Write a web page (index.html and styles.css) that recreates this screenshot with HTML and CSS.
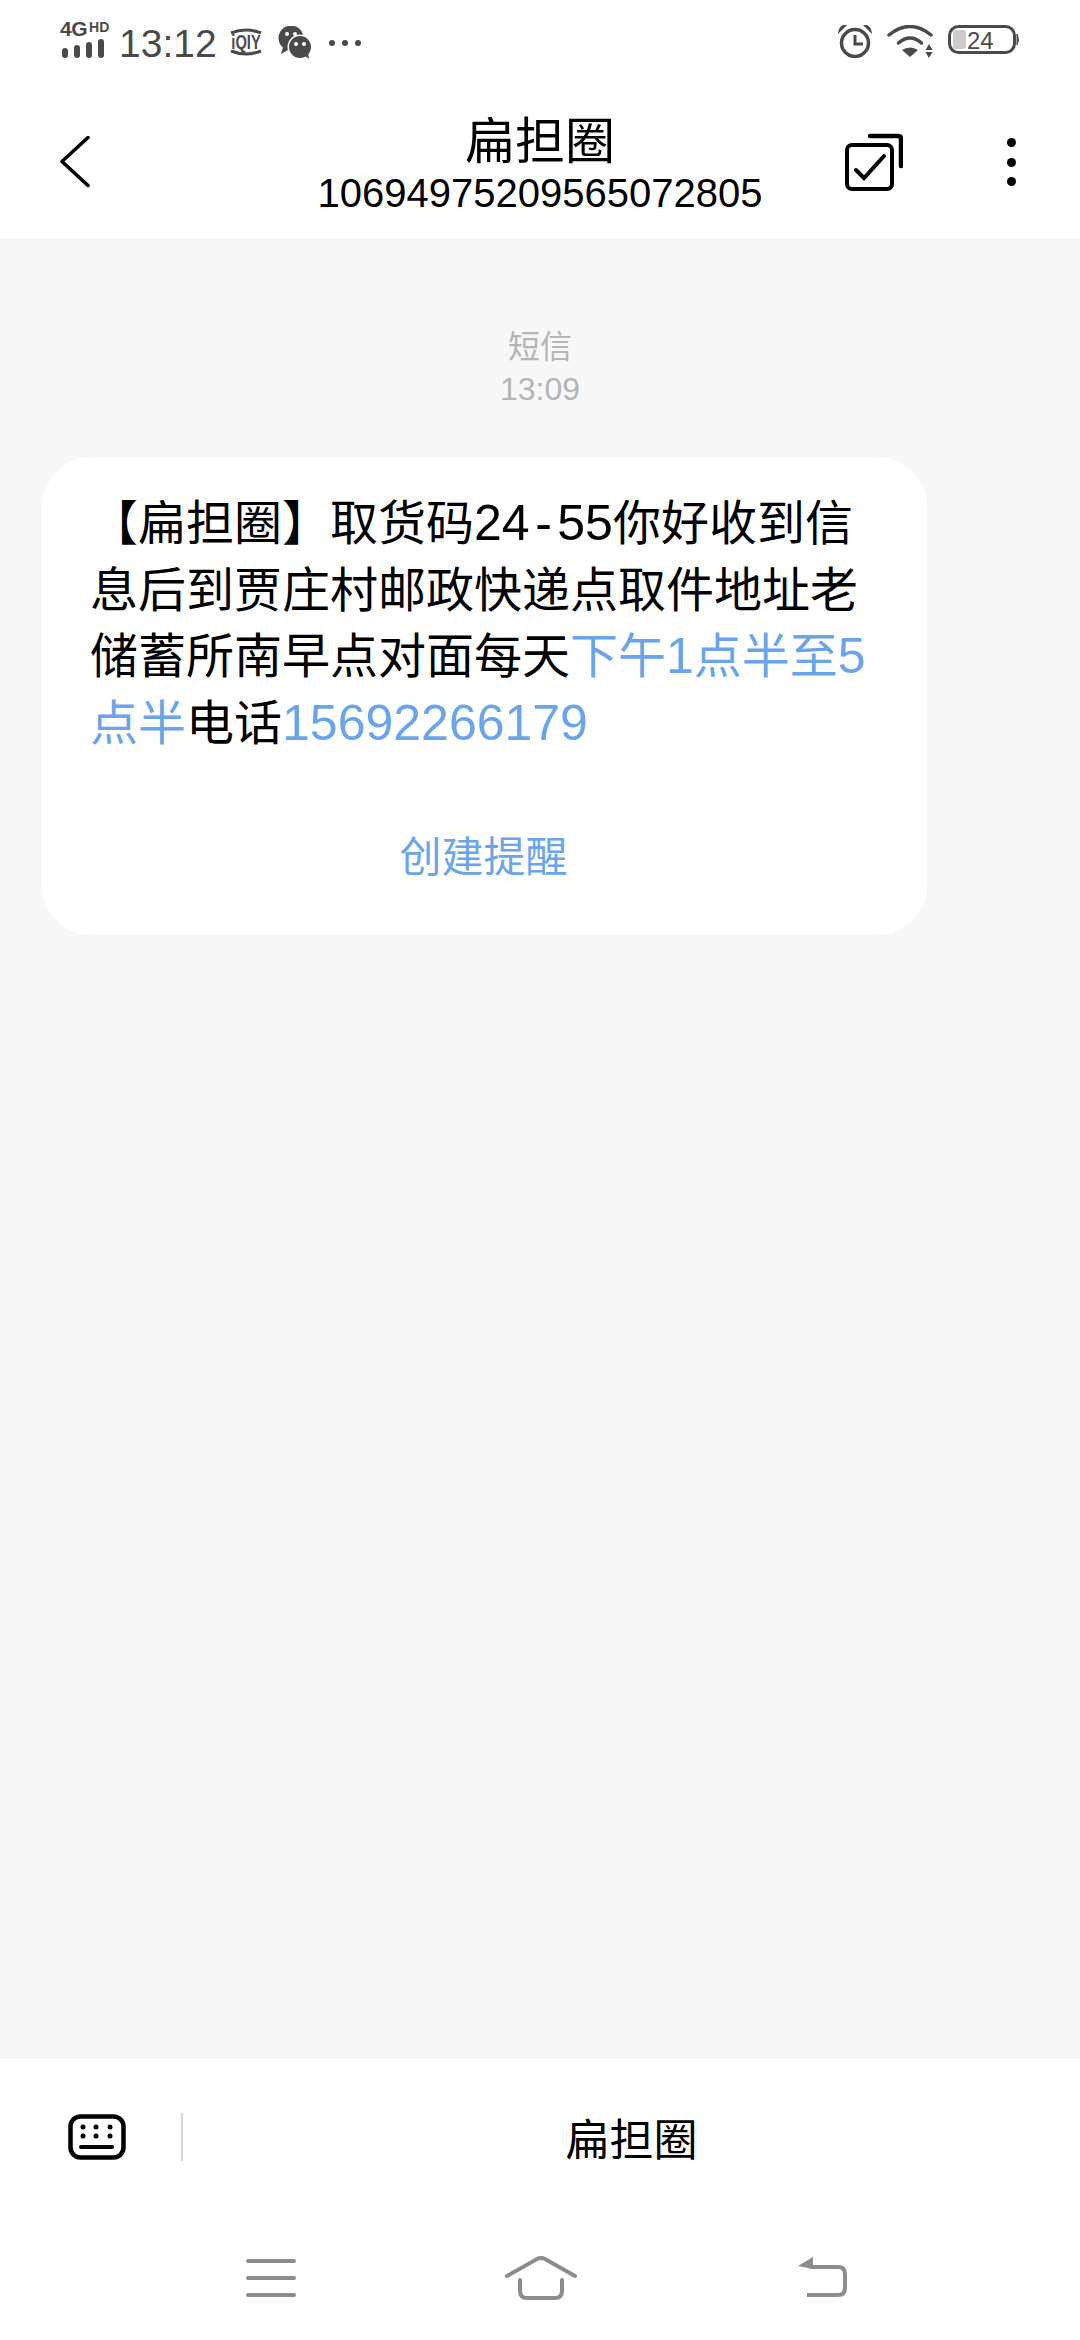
FILE: index.html
```html
<!DOCTYPE html>
<html lang="zh-CN">
<head>
    <meta charset="UTF-8">
    <meta name="viewport" content="width=device-width, initial-scale=1.0">
    <title>扁担圈</title>
    <link rel="stylesheet" href="styles.css">
</head>
<body>
    <div class="status-bar">
        <div class="net">
            <div class="net-labels"><span class="net-4g">4G</span><span class="net-hd">HD</span></div>
            <div class="signal">
                <i class="bar-1"></i><i class="bar-2"></i><i class="bar-3"></i><i class="bar-4"></i>
            </div>
        </div>
        <span class="clock">13:12</span>
        <svg class="icon-iqiyi" width="34" height="28" viewBox="0 0 34 28">
            <path d="M2 5 Q17 -1 32 5 M2 23 Q17 29 32 23" fill="none" stroke="#4a4a4a" stroke-width="3"/>
            <text transform="translate(17 21) scale(0.7 1)" text-anchor="middle" class="iqiyi-text">iQIY</text>
        </svg>
        <svg class="icon-wechat" width="34" height="33" viewBox="0 0 34 33">
            <path d="M5 21 L3 28 L10 24 Z" fill="#4a4a4a"/>
            <circle cx="13" cy="12" r="12.5" fill="#4a4a4a"/>
            <circle cx="9" cy="8" r="2" fill="#fff"/>
            <circle cx="17" cy="8" r="2" fill="#fff"/>
            <circle cx="22" cy="21" r="12.5" fill="#fff"/>
            <path d="M26 29 L31 33 L30 26 Z" fill="#4a4a4a"/>
            <circle cx="22" cy="21" r="11" fill="#4a4a4a"/>
            <circle cx="18" cy="18" r="2" fill="#fff"/>
            <circle cx="26" cy="18" r="2" fill="#fff"/>
        </svg>
        <div class="more-dots"><i></i><i></i><i></i></div>
        <div class="status-right">
            <svg width="34" height="33" viewBox="0 0 34 33">
                <circle cx="17" cy="18" r="13.5" fill="none" stroke="#4a4a4a" stroke-width="3.5"/>
                <path d="M17 10v9h8" fill="none" stroke="#4a4a4a" stroke-width="3"/>
                <path d="M1 7 Q2 1 8 0 Z M33 7 Q32 1 26 0 Z" fill="#4a4a4a" stroke="#4a4a4a" stroke-width="1.5"/>
            </svg>
            <svg width="46" height="33" viewBox="0 0 46 33">
                <path d="M2 10 Q23 -7 44 10" fill="none" stroke="#4a4a4a" stroke-width="3.5" stroke-linecap="round"/>
                <path d="M11.500 18 Q23 8 34.500 18" fill="none" stroke="#4a4a4a" stroke-width="3.5" stroke-linecap="round"/>
                <path d="M15 25 Q23 20 31 25 L23 32 Z" fill="#4a4a4a"/>
                <path d="M42 19 L45.500 25 H38.500 Z M38.500 27 H45.500 L42 33 Z" fill="#4a4a4a"/>
            </svg>
            <svg width="72" height="29" viewBox="0 0 72 29">
                <rect x="1.500" y="1.500" width="65" height="26" rx="9" fill="none" stroke="#4a4a4a" stroke-width="3"/>
                <rect x="5" y="5" width="13" height="19" rx="3" fill="#cccccc"/>
                <path d="M69 9 Q72 14.500 69 20 Z" fill="#4a4a4a" stroke="#4a4a4a"/>
                <text x="19" y="23.500" class="battery-text">24</text>
            </svg>
        </div>
    </div>

    <div class="header">
        <svg class="back" width="32" height="52" viewBox="0 0 32 52">
            <path d="M28 2 L2 26 L28 50" transform="translate(0 -0.500)" fill="none" stroke="#000" stroke-width="3.500" stroke-linecap="round" stroke-linejoin="round"/>
        </svg>
        <div class="title-box">
            <div class="title">扁担圈</div>
            <div class="number">10694975209565072805</div>
        </div>
        <div class="header-actions">
            <svg width="58" height="58" viewBox="0 0 58 58">
                <path d="M25 3 H53 Q56 3 56 6 V33" fill="none" stroke="#000" stroke-width="4.500" stroke-linecap="round"/>
                <rect x="2" y="12" width="45" height="44" rx="5" fill="#fff" stroke="#000" stroke-width="4"/>
                <path d="M11 37 L19 45 L39 23" fill="none" stroke="#000" stroke-width="4" stroke-linecap="round"/>
            </svg>
            <div class="menu-dots"><i></i><i></i><i></i></div>
        </div>
    </div>

    <div class="thread">
        <div class="meta">
            <div class="meta-type">短信</div>
            <div class="meta-time">13:09</div>
        </div>
        <div class="bubble">
            <div class="bubble-text">
                <div class="line">【扁担圈】取货码<span class="num">24<span class="dash">-</span>55</span>你好收到信</div>
                <div class="line">息后到贾庄村邮政快递点取件地址老</div>
                <div class="line">储蓄所南早点对面每天<span class="link">下午<span class="num">1</span>点半至<span class="num">5</span></span></div>
                <div class="line"><span class="link">点半</span>电话<span class="link num">15692266179</span></div>
            </div>
            <div class="bubble-action">创建提醒</div>
        </div>
    </div>

    <div class="composer">
        <svg width="58" height="46" viewBox="0 0 58 46">
            <rect x="2.500" y="2.500" width="53" height="41" rx="10" fill="none" stroke="#000" stroke-width="4.500"/>
            <g fill="#000">
                <circle cx="15" cy="13" r="2.500"/><circle cx="28" cy="13" r="2.500"/><circle cx="42" cy="13" r="2.500"/>
                <circle cx="15" cy="22" r="2.500"/><circle cx="28" cy="22" r="2.500"/><circle cx="42" cy="22" r="2.500"/>
            </g>
            <path d="M13 33 H44" stroke="#000" stroke-width="4" stroke-linecap="round"/>
        </svg>
        <div class="divider"></div>
        <div class="composer-name">扁担圈</div>
    </div>

    <div class="nav">
        <svg class="nav-menu" width="50" height="40" viewBox="0 0 50 40">
            <path d="M2 3 H48 M2 20 H48 M2 37 H48" stroke="#8c8c8c" stroke-width="4" stroke-linecap="round"/>
        </svg>
        <svg class="nav-home" width="72" height="44" viewBox="0 0 72 44">
            <path d="M2 20 L32 3 Q36 1 40 3 L70 20" fill="none" stroke="#8c8c8c" stroke-width="4" stroke-linecap="round"/>
            <path d="M15 24 V35 Q15 42 22 42 H50 Q57 42 57 35 V24" fill="none" stroke="#8c8c8c" stroke-width="4" stroke-linecap="round"/>
        </svg>
        <svg class="nav-back" width="50" height="42" viewBox="0 0 50 42">
            <path d="M0 9 L15 0 V12 Z" fill="#8c8c8c"/>
            <path d="M12 10 H40 Q47 10 47 17 V31 Q47 38 40 38 H9" fill="none" stroke="#8c8c8c" stroke-width="4"/>
        </svg>
    </div>
</body>
</html>
```

FILE: styles.css
```css
* {
    box-sizing: border-box;
}
body {
    margin: 0;
    width: 1080px;
    height: 2340px;
    display: flex;
    flex-direction: column;
    background-color: #fff;
    color: #000;
    font-family: "Liberation Sans", "Noto Sans CJK SC", sans-serif;
    overflow: hidden;
}
svg {
    display: block;
    flex-shrink: 0;
}

/* status bar */
.status-bar {
    height: 80px;
    padding: 21px 60px 0 60px;
    display: flex;
    align-items: flex-start;
    color: #4a4a4a;
}
.net {
    width: 46px;
    height: 37px;
    display: flex;
    flex-direction: column;
    justify-content: space-between;
}
.net-labels {
    display: flex;
    align-items: flex-start;
    height: 16px;
    font-weight: bold;
    line-height: 16px;
}
.net-4g {
    font-size: 21px;
    letter-spacing: -0.5px;
}
.net-hd {
    font-size: 14px;
    line-height: 12px;
    margin-left: 2px;
}
.signal {
    display: flex;
    align-items: flex-end;
    gap: 6px;
    margin-left: 2px;
    height: 19px;
}
.signal i {
    display: block;
    width: 6px;
    border-radius: 3px;
    background-color: #4a4a4a;
}
.bar-1 { height: 10px; }
.bar-2 { height: 13px; }
.bar-3 { height: 16px; }
.bar-4 { height: 19px; }
.clock {
    margin-left: 13px;
    margin-top: 1px;
    font-size: 39px;
    line-height: 44px;
}
.icon-iqiyi {
    margin-left: 12px;
    margin-top: 7px;
}
.iqiyi-text {
    font-size: 21px;
    font-weight: bold;
    fill: #4a4a4a;
}
.icon-wechat {
    margin-left: 15px;
    margin-top: 5px;
}
.more-dots {
    margin-left: 17px;
    margin-top: 19px;
    display: flex;
    gap: 7px;
}
.more-dots i {
    display: block;
    width: 6px;
    height: 6px;
    border-radius: 50%;
    background-color: #4a4a4a;
}
.status-right {
    margin-left: auto;
    margin-top: 4px;
    display: flex;
    gap: 15px;
}
.battery-text {
    font-size: 24px;
    fill: #4a4a4a;
}

/* header */
.header {
    height: 158px;
    display: grid;
    grid-template-columns: 1fr auto 1fr;
    align-items: start;
    padding: 0 60px;
}
.back {
    margin-top: 56px;
}
.title-box {
    padding-top: 34px;
    text-align: center;
}
.title {
    font-size: 50px;
    line-height: 56px;
}
.number {
    font-size: 40px;
    line-height: 46px;
}
.header-actions {
    display: flex;
    justify-content: flex-end;
    gap: 104px;
    margin-top: 53px;
    margin-right: 4px;
}
.menu-dots {
    display: flex;
    flex-direction: column;
    gap: 10.5px;
    margin-top: 5px;
}
.menu-dots i {
    display: block;
    width: 9px;
    height: 9px;
    border-radius: 50%;
    background-color: #000;
}

/* thread */
.thread {
    flex: 1;
    background-color: #f7f7f7;
    padding-top: 87px;
}
.meta {
    text-align: center;
    color: #b5b5b5;
    font-size: 32px;
}
.meta-type {
    line-height: 44px;
}
.meta-time {
    line-height: 40px;
}
.bubble {
    width: 885px;
    margin: 48px 0 0 42px;
    padding: 34px 50px 47px 48px;
    background-color: #fff;
    border-radius: 50px;
}
.bubble-text {
    font-size: 48px;
}
.line {
    height: 66.5px;
    line-height: 66.5px;
    white-space: nowrap;
}
.num {
    font-size: 50px;
    line-height: 1;
}
.dash {
    padding: 0 5.5px;
}
.link {
    color: #6aa5ea;
}
.bubble-action {
    margin-top: 71px;
    text-align: center;
    font-size: 42px;
    line-height: 60px;
    color: #6aa5ea;
}

/* bottom */
.composer {
    height: 156px;
    display: flex;
    align-items: center;
    padding-left: 68px;
}
.divider {
    width: 2px;
    height: 48px;
    margin-left: 55px;
    background-color: #d8d8d8;
}
.composer-name {
    flex: 1;
    text-align: center;
    font-size: 44px;
}
.nav {
    height: 125px;
    display: flex;
    align-items: center;
    padding-left: 246px;
}
.nav-home {
    margin-left: 209px;
}
.nav-back {
    margin-left: 221px;
}
```
